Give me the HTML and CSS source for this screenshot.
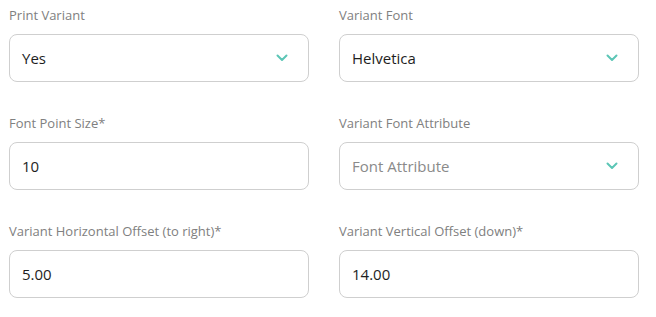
FILE: index.html
```html
<!DOCTYPE html>
<html lang="en">

<head>
  <meta charset="UTF-8">
  <meta name="viewport" content="width=device-width, initial-scale=1.0">
  <title>Variant Settings</title>
  <link rel="stylesheet" href="styles.css">
</head>

<body>
  <form class="variant-form">
    <div class="field">
      <label class="field-label">Print Variant</label>
      <div class="field-box select">
        <span class="value">Yes</span>
        <svg class="chevron" width="12" height="8" viewBox="0 0 12 8"><path d="M1.5 1.5 L6 6 L10.5 1.5" /></svg>
      </div>
    </div>
    <div class="field">
      <label class="field-label">Variant Font</label>
      <div class="field-box select">
        <span class="value">Helvetica</span>
        <svg class="chevron" width="12" height="8" viewBox="0 0 12 8"><path d="M1.5 1.5 L6 6 L10.5 1.5" /></svg>
      </div>
    </div>
    <div class="field">
      <label class="field-label">Font Point Size*</label>
      <div class="field-box">
        <span class="value">10</span>
      </div>
    </div>
    <div class="field">
      <label class="field-label">Variant Font Attribute</label>
      <div class="field-box select">
        <span class="value placeholder">Font Attribute</span>
        <svg class="chevron" width="12" height="8" viewBox="0 0 12 8"><path d="M1.5 1.5 L6 6 L10.5 1.5" /></svg>
      </div>
    </div>
    <div class="field">
      <label class="field-label">Variant Horizontal Offset (to right)*</label>
      <div class="field-box">
        <span class="value">5.00</span>
      </div>
    </div>
    <div class="field">
      <label class="field-label">Variant Vertical Offset (down)*</label>
      <div class="field-box">
        <span class="value">14.00</span>
      </div>
    </div>
  </form>
</body>

</html>
```

FILE: styles.css
```css
body {
  margin: 0;
  background-color: #fff;
  font-family: "Open Sans", "Liberation Sans", sans-serif;
}

.variant-form {
  display: grid;
  grid-template-columns: 300px 300px;
  column-gap: 30px;
  row-gap: 31px;
  padding: 5px 0 0 9px;
}

.field {
  display: flex;
  flex-direction: column;
  gap: 9px;
}

.field-label {
  font-size: 13px;
  line-height: 20px;
  color: #808080;
}

.field-box {
  height: 46px;
  border: 1px solid #cfcfcf;
  border-radius: 8px;
  display: flex;
  align-items: center;
  justify-content: space-between;
  padding: 0 20px 0 12px;
}

.value {
  font-size: 15px;
  color: #1e1e1e;
}

.placeholder {
  color: #8a8a8a;
}

.chevron path {
  fill: none;
  stroke: #5cc6b6;
  stroke-width: 2;
  stroke-linecap: round;
  stroke-linejoin: round;
}
```
